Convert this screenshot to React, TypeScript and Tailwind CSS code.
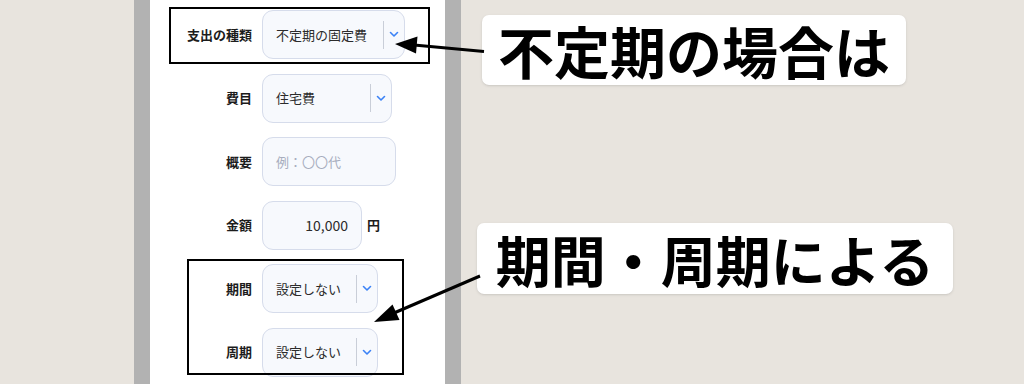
const Chevron = () => (
  <svg width="10" height="7" viewBox="0 0 10 7" className="shrink-0">
    <polyline points="1.5,1.5 5,5 8.5,1.5" fill="none" stroke="#3b82f6" strokeWidth="1.6" strokeLinecap="round" strokeLinejoin="round" />
  </svg>
);

const Select = ({ value, width }: { value: string; width: string }) => (
  <div className={`${width} h-[49px] flex items-center rounded-[11px] border border-[#d6dceb] bg-[#f7f9fd]`}>
    <span className="flex-1 pl-[13px] text-[13px] text-[#2b2b2b]">{value}</span>
    <div className="w-px h-[28px] bg-[#c9ced8]" />
    <div className="w-[20px] flex justify-center">
      <Chevron />
    </div>
  </div>
);

const Row = ({ label, children }: { label: string; children: React.ReactNode }) => (
  <div className="flex items-center h-[49px]">
    <div className="w-[102px] text-right text-[13px] font-bold text-[#1c1c1c]">{label}</div>
    <div className="ml-[10px] flex items-center">{children}</div>
  </div>
);

export default function App() {
  return (
    <div
      className="relative w-[1024px] h-[384px] overflow-hidden bg-[#e8e4de] flex"
      style={{ fontFamily: '"Noto Sans CJK JP", "Noto Sans", sans-serif' }}
    >
      {/* phone screen */}
      <div className="relative ml-[134px] w-[327px] h-full border-x-[16px] border-[#b2b2b2] bg-white">
        <div className="flex flex-col gap-[14.5px] pt-[10px]">
          <Row label="支出の種類">
            <Select value="不定期の固定費" width="w-[143px]" />
          </Row>
          <Row label="費目">
            <Select value="住宅費" width="w-[130px]" />
          </Row>
          <Row label="概要">
            <div className="w-[134px] h-[49px] flex items-center rounded-[11px] border border-[#d6dceb] bg-[#f7f9fd] pl-[13px] text-[13px] text-[#a7adbd]">
              例：〇〇代
            </div>
          </Row>
          <Row label="金額">
            <div className="w-[100px] h-[49px] flex items-center justify-end rounded-[11px] border border-[#d6dceb] bg-[#f7f9fd] pr-[13px] text-[14px] text-[#2b2b2b]">
              10,000
            </div>
            <span className="ml-[5px] text-[13px] font-bold text-[#1c1c1c]">円</span>
          </Row>
          <Row label="期間">
            <Select value="設定しない" width="w-[116px]" />
          </Row>
          <Row label="周期">
            <Select value="設定しない" width="w-[116px]" />
          </Row>
        </div>

        {/* highlight frames */}
        <div className="absolute left-[19px] top-[7px] w-[261px] h-[57px] border-2 border-black" />
        <div className="absolute left-[37px] top-[259px] w-[217px] h-[116px] border-2 border-black" />
      </div>

      {/* callouts */}
      <div className="flex flex-col items-start">
        <div className="mt-[15px] ml-[21px] w-[424px] h-[70px] flex items-center justify-center rounded-[7px] bg-white shadow-sm">
          <span className="text-[56px] leading-none font-bold text-black">不定期の場合は</span>
        </div>
        <div className="mt-[138px] ml-[16px] w-[476px] h-[71px] flex items-center justify-center rounded-[7px] bg-white shadow-sm">
          <span className="text-[55px] leading-none font-bold text-black">期間・周期による</span>
        </div>
      </div>

      {/* arrows */}
      <svg className="absolute inset-0 pointer-events-none" width="1024" height="384">
        <line x1="484" y1="51.5" x2="414" y2="45" stroke="black" strokeWidth="3" />
        <polygon points="395,44 417.5,36.5 416,53.5" fill="black" />
        <line x1="480" y1="276" x2="394" y2="313" stroke="black" strokeWidth="3" />
        <polygon points="374,322 392.5,304.5 399.5,320" fill="black" />
      </svg>
    </div>
  );
}
